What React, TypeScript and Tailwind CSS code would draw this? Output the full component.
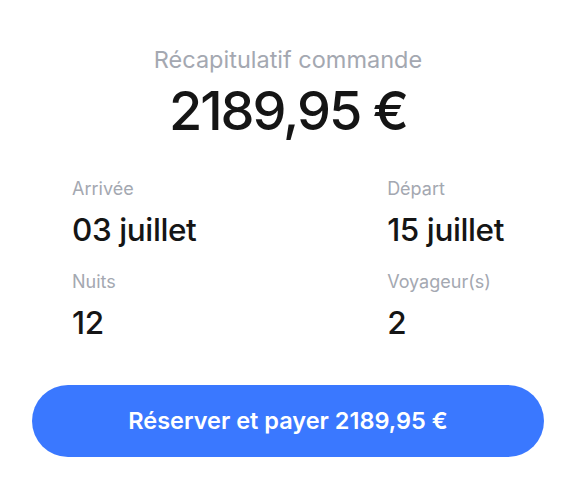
const Info = (props: { label: string; value: string }) => (
    <div className="flex flex-col">
        <span className="text-[18px] leading-[24px] text-[#a4a8b1]">{props.label}</span>
        <span className="mt-[11px] text-[31.5px] leading-[36px] font-medium text-[#151515] tracking-[-0.4px]">{props.value}</span>
    </div>
)

export default function App() {
    return (
        <div className="w-[576px] h-[489px] bg-white font-['Inter',sans-serif] flex flex-col px-8 pt-[45px]">
            <div className="flex flex-col items-center">
                <h2 className="text-[23.5px] leading-[30px] text-[#a4a8b1]">Récapitulatif commande</h2>
                <div className="mt-[4px] text-[54px] leading-[64px] font-medium text-[#151515] tracking-[-2px]">2189,95 €</div>
            </div>
            <div className="mt-[34px] px-10 flex justify-between">
                <div className="flex flex-col gap-[22px]">
                    <Info label="Arrivée" value="03 juillet" />
                    <Info label="Nuits" value="12" />
                </div>
                <div className="flex flex-col gap-[22px]">
                    <Info label="Départ" value="15 juillet" />
                    <Info label="Voyageur(s)" value="2" />
                </div>
            </div>
            <button className="mt-[44px] h-[72px] w-full rounded-full bg-[#3a78ff] text-white text-[23.5px] font-semibold">
                Réserver et payer 2189,95 €
            </button>
        </div>
    )
}
